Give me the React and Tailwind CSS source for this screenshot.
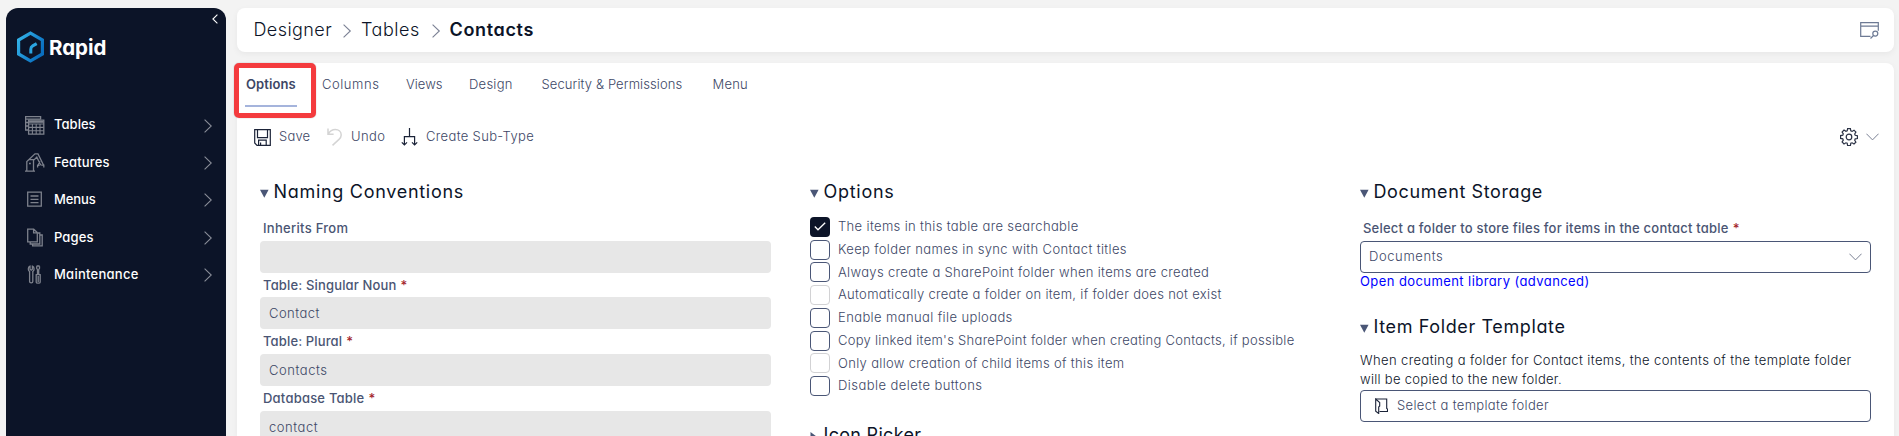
import React from "react";

const GridIcon = () => (
  <svg width="20" height="19" viewBox="0 0 20 19" fill="none" stroke="#7d818c" strokeWidth="1.1">
    <path d="M3 14H.6V.6h15V3.5M.6 3.2h15M.6 6.5H3M.6 10H3" strokeWidth="1.3" />
    <path d="M3.6 4.2h15.2v14H3.6z" strokeWidth="1.3" />
    <path d="M3.6 8h15.2M3.6 11.4h15.2M3.6 14.8h15.2M7.4 8v10M11.2 8v10M15 8v10" />
    <path d="M4 5.8h14.6" strokeWidth="2" />
  </svg>
);
const CraneIcon = () => (
  <svg width="20" height="19" viewBox="0 0 20 19" fill="none" stroke="#7d818c" strokeWidth="1.3">
    <path d="M0 18.2h10M1.8 18V8.6L4 6.6h4.5v11.6M2.400 8 10 .9h3l5.600 11.400M8.500 7.400l3.300-3.200 4 8M15 8.200l-2 4.200" />
    <path d="M12.6 14.6v-2.200h2M18.800 14.600v-2.400h-2.600M4 10.500h1.800" />
  </svg>
);
const MenuIcon = () => (
  <svg width="20" height="19" viewBox="0 0 20 19" fill="none" stroke="#7d818c" strokeWidth="1.3">
    <path d="M2.7 2.2h13.6v14H2.7z" />
    <path d="M5.5 6h8M5.5 9.3h8M5.5 12.6h8" />
  </svg>
);
const PagesIcon = () => (
  <svg width="20" height="19" viewBox="0 0 20 19" fill="none" stroke="#7d818c" strokeWidth="1.3">
    <path d="M2.7 1.2h6l3.6 3.4v9.2H2.7zM8.6 1.4v3.4h3.6" />
    <path d="M5.2 14v2h9.6V5h-2M7.6 16v1.8h9.6V7h-2" />
  </svg>
);
const ToolsIcon = () => (
  <svg width="20" height="19" viewBox="0 0 20 19" fill="none" stroke="#7d818c" strokeWidth="1.300">
    <path d="M5 1.200v3l1.200 1 1.200-1v-3c1.200.6 1.700 1.500 1.700 2.700s-.5 1.900-1.300 2.500v10.200c0 .8-.6 1.300-1.600 1.300s-1.600-.5-1.600-1.300V6.400C3.800 5.800 3.300 5 3.300 3.900s.5-2.100 1.700-2.700z" />
    <path d="M11.600 1h3M11.700 1.200v2.200l.8 1.200v4.600M14.500 1.200v2.200l-.8 1.200v4.600M10.600 9.600h5.200M11.200 10v7.200c0 .6.800 1 2 1s2-.4 2-1V10M13.200 11v6" />
  </svg>
);

const Chevron = ({ className }) => (
  <svg className={className} viewBox="0 0 8 14" fill="none" stroke="currentColor" strokeWidth="1.1">
    <path d="M.6.6 7.300 7 .6 13.400" />
  </svg>
);
const Down = () => (
  <svg width="13" height="8" viewBox="0 0 13 8" fill="none" stroke="#7b8194" strokeWidth="1">
    <path d="M.4.7l6.100 6.200L12.600.7" />
  </svg>
);

const nav = [
  { label: "Tables", icon: GridIcon, track: "tracking-[0.03px]" },
  { label: "Features", icon: CraneIcon, track: "tracking-[0.14px]" },
  { label: "Menus", icon: MenuIcon, track: "tracking-[-0.1px]" },
  { label: "Pages", icon: PagesIcon, track: "tracking-[0.1px]" },
  { label: "Maintenance", icon: ToolsIcon, track: "tracking-[0.26px]" },
];

const tabs = [
  { label: "Columns", cls: "w-[84px] tracking-[0.55px]" },
  { label: "Views", cls: "w-[63px] tracking-[0.03px]" },
  { label: "Design", cls: "w-[72.500px] tracking-[0.25px]" },
  { label: "Security & Permissions", cls: "w-[171px] tracking-[0.1px]" },
  { label: "Menu", cls: "tracking-[0.2px]" },
];

const fields = [
  { label: "Inherits From", value: "", lt: "tracking-[0.29px]", vt: "" },
  { label: "Table: Singular Noun", value: "Contact", required: true, lt: "tracking-[0.16px]", vt: "tracking-[0.45px]" },
  { label: "Table: Plural", value: "Contacts", required: true, lt: "tracking-[0.14px]", vt: "tracking-[0.55px]" },
  { label: "Database Table", value: "contact", required: true, lt: "tracking-[0.22px]", vt: "tracking-[0.54px]" },
];

const checks = [
  { label: "The items in this table are searchable", checked: true, track: "tracking-[0.35px]" },
  { label: "Keep folder names in sync with Contact titles", track: "tracking-[0.36px]" },
  { label: "Always create a SharePoint folder when items are created", track: "tracking-[0.34px]" },
  { label: "Automatically create a folder on item, if folder does not exist", disabled: true, track: "tracking-[0.31px]" },
  { label: "Enable manual file uploads", track: "tracking-[0.39px]" },
  { label: "Copy linked item's SharePoint folder when creating Contacts, if possible", track: "tracking-[0.28px]" },
  { label: "Only allow creation of child items of this item", disabled: true, track: "tracking-[0.33px]" },
  { label: "Disable delete buttons", track: "tracking-[0.44px]" },
];

const Heading = ({ children, track, closed }) => (
  <h2 className="flex h-6 items-center text-[18px] leading-6 text-[#0c1428]">
    <svg width="13.500" height="9" viewBox="0 0 13.500 9" className="mt-[3px] shrink-0" fill="#4a5676">
      {closed ? <path d="M.5 0v9L6.500 4.500z" /> : <path d="M0 .8h8.600L4.300 8.800z" />}
    </svg>
    <span className={track}>{children}</span>
  </h2>
);

const Star = () => <span className="ml-1 text-[#a4262c]">*</span>;

const Sidebar = () => (
  <aside className="flex w-[220px] shrink-0 flex-col rounded-t-xl bg-[#0c1428] text-white">
    <div className="flex h-[22px] items-end justify-end pr-2">
      <svg width="6" height="10" viewBox="0 0 6 10" className="mb-[6px]" fill="none" stroke="#fff" strokeWidth="1.1">
        <path d="M5.400.6.900 5l4.500 4.400" />
      </svg>
    </div>
    <div className="flex h-[34px] items-center pl-[11px]">
      <svg width="27" height="32" viewBox="0 0 27 32" fill="none">
        <defs>
          <linearGradient id="hex" x1="0" y1="0" x2="1" y2="0.6">
            <stop offset="0" stopColor="#35b6ea" />
            <stop offset="1" stopColor="#0a6fc0" />
          </linearGradient>
        </defs>
        <path d="M13.500 2.200 25.400 9v14L13.500 29.800 1.600 23V9z" stroke="url(#hex)" strokeWidth="3.200" />
        <path d="M13.800 22.500v-4.300q0-2.200 1.900-3.300l4-2.300" stroke="#2ba5e2" strokeWidth="3" />
      </svg>
      <span className="ml-[5px] mt-[2px] text-[20.500px] font-bold leading-6 tracking-[-0.05px]">Rapid</span>
    </div>
    <nav className="mt-[42.500px] flex flex-col">
      {nav.map(({ label, icon: Icon, track }) => (
        <a key={label} className="flex h-[37.400px] items-center pl-[19px] pr-3.5 text-[13px] font-medium">
          <Icon />
          <span className={`ml-[9px] flex-1 ${track}`}>{label}</span>
          <Chevron className="mt-px h-3.5 w-2 text-[#8a8e99]" />
        </a>
      ))}
    </nav>
  </aside>
);

const Toolbar = () => (
  <div className="flex h-6 items-center pl-[17px] pr-[15px] text-[13px] font-light text-[#3d4766]">
    <svg width="17" height="17" viewBox="0 0 17 17" fill="none" stroke="#1b2338" strokeWidth="1.200">
      <path d="M.7.7h15.600v15.600H3L.7 14zM3.500 1v7.600h10V1M4.600 16v-4.800h7.600V16M6.600 16v-2.600" />
    </svg>
    <span className="ml-2 w-[48px] tracking-[0.2px]">Save</span>
    <svg width="15" height="18" viewBox="0 0 15 18" fill="none" stroke="#d4d4d4" strokeWidth="1.500">
      <path d="M1 .5v5.800h5.600M1.200 6C3 3 5.500 1.600 8.300 1.600c3.500 0 5.900 2.300 5.900 5.300 0 2-.9 3.200-2.200 4.500l-6.500 6" />
    </svg>
    <span className="ml-[9px] w-[50px] tracking-[0.4px]">Undo</span>
    <svg width="17" height="18" viewBox="0 0 17 18" fill="none" stroke="#1b2338" strokeWidth="1.200">
      <path d="M8.500 0v8.500M3.400 17V8.600h10.200V17M.8 14.400 3.400 17 6 14.400M11 14.400l2.600 2.600 2.600-2.600" />
    </svg>
    <span className="ml-2 flex-1 tracking-[0.34px]">Create Sub-Type</span>
    <svg width="18" height="18" viewBox="0 0 18 18" fill="none" stroke="#2b3245" strokeWidth="1.200">
      <path d="M7.600.7h2.800l.4 2.200 1.300.5 1.900-1.200 1.900 1.900-1.200 1.900.5 1.300 2.200.4v2.800l-2.200.4-.5 1.300 1.200 1.900-1.900 1.900-1.900-1.200-1.300.5-.4 2.200H7.600l-.4-2.200-1.300-.5L4 15.900 2.100 14l1.200-1.900-.5-1.300-2.200-.4V7.600l2.200-.4.5-1.300L2.100 4 4 2.100l1.900 1.200 1.300-.5z" />
      <circle cx="9" cy="9" r="2.800" />
    </svg>
    <span className="ml-2"><Down /></span>
  </div>
);

export default function App() {
  return (
    <div className="flex h-[436px] gap-[11px] overflow-hidden bg-[#f3f3f3] pl-1.5 pr-[5px] pt-2 font-['Inter',sans-serif] [font-feature-settings:'cv11']">
      <Sidebar />
      <main className="flex min-w-0 flex-1 flex-col gap-[11px]">
        <header className="flex h-11 shrink-0 items-center rounded-lg bg-white pl-[16.500px] pr-[15px] text-[18px] text-[#0c1428] shadow-[0_2px_6px_rgba(0,0,0,0.05)]">
          <span className="-mt-0.5 w-[90px] font-light tracking-[0.42px]">Designer</span>
          <Chevron className="mt-0.5 -ml-1.5 h-3.5 w-[18px] text-[#7b8194]" />
          <span className="-mt-0.5 ml-[5.500px] w-[71.500px] font-light tracking-[0.540px]">Tables</span>
          <Chevron className="mt-0.5 -ml-1.5 h-3.5 w-[18px] text-[#7b8194]" />
          <span className="-mt-0.5 ml-[5px] flex-1 font-semibold tracking-[0.660px]">Contacts</span>
          <svg width="19" height="17" viewBox="0 0 19 17" fill="none" stroke="#6d7a94" strokeWidth="1.200">
            <path d="M10.500 14.400H.7V.7h17.600v8M.7 4.200h17.600" />
            <circle cx="15.300" cy="11.600" r="2.500" />
            <path d="m13.500 13.500-3 3" />
          </svg>
        </header>

        <section className="flex min-h-0 flex-1 flex-col rounded-t-lg bg-white shadow-[0_2px_6px_rgba(0,0,0,0.05)]">
          <div className="flex h-[54px] items-start text-[13px] font-light leading-[42px] text-[#3d4766]">
            <div className="relative -ml-[3px] flex h-[55px] w-[82px] shrink-0 flex-col rounded-[5px] border-[5px] border-[#f43b3e] pl-[6px] shadow-[0_0_1px_rgba(60,60,60,0.6)]">
              <span className="h-[39px] w-[52px] border-b-2 border-[#a5b4dc] pl-px font-semibold leading-[33px] tracking-[0.09px]">Options</span>
            </div>
            <div className="flex pl-[6px]">
              {tabs.map((t) => (
                <span key={t.label} className={`whitespace-nowrap ${t.cls}`}>{t.label}</span>
              ))}
            </div>
          </div>
          <div className="mt-2"><Toolbar /></div>

          <div className="mt-[31px] grid grid-cols-[511px_511px_511px] gap-x-[39px] pl-[23px]">
            <div>
              <Heading track="tracking-[0.700px]">Naming Conventions</Heading>
              <div className="mt-3">
                {fields.map((f) => (
                  <div key={f.label} className="text-[13px]">
                    <div className={`h-[24.670px] pl-[3px] font-medium leading-6 text-[#4a5573] ${f.lt}`}>
                      {f.label}
                      {f.required && <Star />}
                    </div>
                    <div className={`h-8 rounded bg-[#e7e7e7] pl-[9px] font-light leading-8 text-[#3d4766] ${f.vt}`}>{f.value}</div>
                  </div>
                ))}
              </div>
            </div>

            <div>
              <Heading track="tracking-[0.720px]">Options</Heading>
              <div className="mt-[11.500px] flex flex-col">
                {checks.map((c) => (
                  <label key={c.label} className="flex h-[22.780px] items-center gap-2 text-[13px] font-light text-[#3d4766]">
                    {c.checked ? (
                      <span className="flex size-5 items-center justify-center rounded bg-[#0c1428]">
                        <svg width="12" height="9" viewBox="0 0 12 9" fill="none" stroke="#fff" strokeWidth="1.300">
                          <path d="m.8 4.500 3.200 3.300L11.200.8" />
                        </svg>
                      </span>
                    ) : (
                      <span className={`size-5 rounded border ${c.disabled ? "border-[#d2d2d4]" : "border-[#4a5676]"}`} />
                    )}
                    <span className={`whitespace-nowrap ${c.track}`}>{c.label}</span>
                  </label>
                ))}
              </div>
              <div className="mt-[25px]">
                <Heading closed track="tracking-[0.300px]">Icon Picker</Heading>
              </div>
            </div>

            <div className="text-[13px]">
              <Heading track="tracking-[0.610px]">Document Storage</Heading>
              <div className="mt-3 h-[24.670px] whitespace-nowrap pl-[3px] font-medium leading-6 tracking-[0.220px] text-[#4a5573]">
                Select a folder to store files for items in the contact table
                <Star />
              </div>
              <div className="flex h-8 items-center justify-between rounded border border-[#4a5676] pl-2 pr-2 font-light tracking-[0.600px] text-[#3d4766]">
                Documents
                <Down />
              </div>
              <a className="block h-[18px] leading-[17px] tracking-[0.420px] text-[#0000ff]">Open document library (advanced)</a>
              <div className="mt-6">
                <Heading track="tracking-[0.620px]">Item Folder Template</Heading>
              </div>
              <p className="mt-3 whitespace-nowrap font-light leading-[19px] text-[#0c1428]">
                <span className="block tracking-[0.390px]">When creating a folder for Contact items, the contents of the template folder</span>
                <span className="block tracking-[0.300px]">will be copied to the new folder.</span>
              </p>
              <div className="mt-px flex h-8 items-center rounded border border-[#4a5676] pl-3.5 font-light tracking-[0.340px] text-[#3d4766]">
                <svg width="13" height="16" viewBox="0 0 13 16" fill="none" stroke="#1b2338" strokeWidth="1.100">
                  <path d="M.7 1h11v9.500l.8.500v2.500H4.500" />
                  <path d="M.7 1v12.300l3 2.200v-6.500l1-1V4.500z" />
                </svg>
                <span className="ml-[9px]">Select a template folder</span>
              </div>
            </div>
          </div>
        </section>
      </main>
    </div>
  );
}
